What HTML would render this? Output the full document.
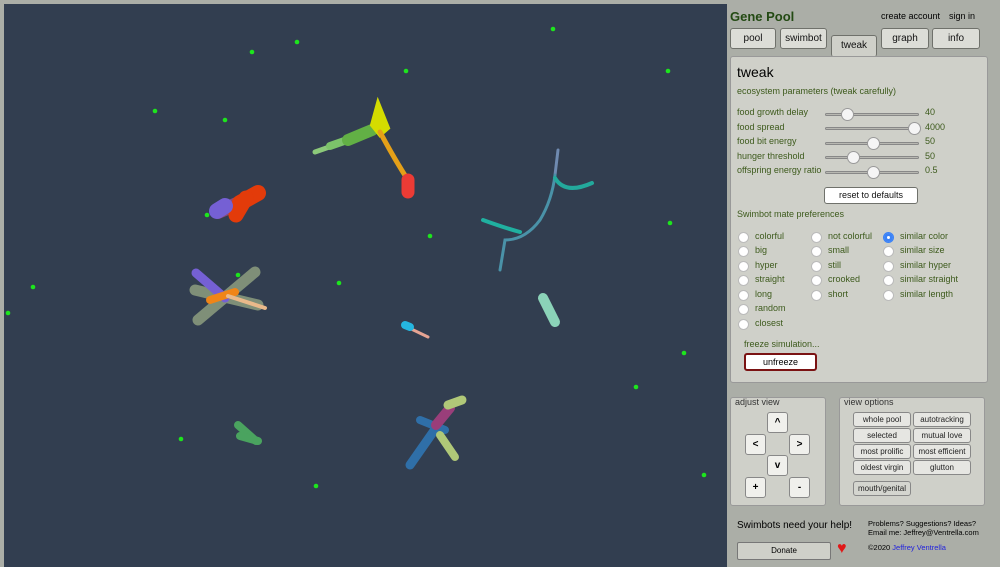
<!DOCTYPE html><html><head><style>
*{margin:0;padding:0;box-sizing:border-box}
body{width:1000px;height:567px;background:#abaea7;font-family:"Liberation Sans",sans-serif;position:relative;overflow:hidden}
.a{position:absolute}
.btn{position:absolute;background:#dcddd7;border:1px solid #6f716b;border-radius:3px;font-size:10px;text-align:center;color:#111}
.g{color:#3d5a1c;font-size:9px;position:absolute}
.sl{position:absolute;left:825px;width:94px;height:3px;background:#b8b8b2;border:1px solid #888;border-radius:2px}
.kn{position:absolute;width:13px;height:13px;border-radius:50%;background:#f5f5f5;border:1px solid #999;top:-6px}
.r{position:absolute;width:11px;height:11px;border-radius:50%;background:#fff;border:1px solid #bbb}
.vb{position:absolute;background:#e6e6e2;border:1px solid #888;border-radius:3px;font-size:8px;text-align:center;line-height:13px;height:15px;width:58px;color:#222}
.ab{position:absolute;width:21px;height:21px;background:#f0f0ec;border:1px solid #888;border-radius:3px;font-size:10px;text-align:center;line-height:19px;font-weight:bold}
</style></head><body>
<div class="a" style="left:4px;top:4px;width:723px;height:563px;background:#323e50"></div>
<svg class="a" style="left:0;top:0" width="728" height="567">
<g fill="#1de51d">
<circle cx="252" cy="52" r="2.3"/><circle cx="297" cy="42" r="2.3"/><circle cx="553" cy="29" r="2.3"/><circle cx="406" cy="71" r="2.3"/><circle cx="668" cy="71" r="2.3"/><circle cx="155" cy="111" r="2.3"/><circle cx="225" cy="120" r="2.3"/><circle cx="430" cy="236" r="2.3"/><circle cx="670" cy="223" r="2.3"/><circle cx="238" cy="275" r="2.3"/><circle cx="339" cy="283" r="2.3"/><circle cx="33" cy="287" r="2.3"/><circle cx="8" cy="313" r="2.3"/><circle cx="684" cy="353" r="2.3"/><circle cx="636" cy="387" r="2.3"/><circle cx="181" cy="439" r="2.3"/><circle cx="704" cy="475" r="2.3"/><circle cx="316" cy="486" r="2.3"/><circle cx="207" cy="215" r="2.3"/>
</g>
<g stroke-linecap="round" fill="none">
<line x1="315" y1="152" x2="335" y2="145" stroke="#8cc97a" stroke-width="5"/>
<line x1="330" y1="146" x2="350" y2="139" stroke="#7cc36a" stroke-width="8"/>
<line x1="348" y1="140" x2="372" y2="130" stroke="#62b045" stroke-width="12"/>
<path d="M378 103 L388 128 L380 135 L372 125Z" fill="#d4dc00" stroke="#d4dc00" stroke-width="4"/>
<path d="M380 132 Q395 160 408 180" stroke="#e5a018" stroke-width="5"/>
<line x1="408" y1="180" x2="408" y2="192" stroke="#ec3b35" stroke-width="13"/>
<line x1="218" y1="212" x2="246" y2="200" stroke="#8a4a7a" stroke-width="14"/>
<line x1="240" y1="203" x2="258" y2="193" stroke="#e33b0a" stroke-width="16"/>
<line x1="236" y1="215" x2="246" y2="198" stroke="#e33b0a" stroke-width="15"/>
<line x1="217" y1="211" x2="225" y2="206" stroke="#7560d4" stroke-width="16"/>
<line x1="195" y1="290" x2="258" y2="305" stroke="#7f8f78" stroke-width="11"/>
<line x1="198" y1="320" x2="255" y2="272" stroke="#7f8f78" stroke-width="11"/>
<line x1="196" y1="273" x2="225" y2="298" stroke="#7560d4" stroke-width="9"/>
<line x1="210" y1="300" x2="235" y2="292" stroke="#f08518" stroke-width="8"/>
<line x1="228" y1="296" x2="265" y2="308" stroke="#e9b98a" stroke-width="4"/>
<line x1="558" y1="150" x2="555" y2="175" stroke="#6f8ab0" stroke-width="3"/>
<path d="M555 175 Q552 200 540 220 Q525 240 505 240 L500 270" stroke="#4a92a8" stroke-width="3"/>
<path d="M555 178 Q565 195 592 183" stroke="#23a99c" stroke-width="4"/>
<path d="M483 220 Q505 228 520 232" stroke="#20b0a0" stroke-width="4"/>
<line x1="543" y1="298" x2="555" y2="322" stroke="#8bd3b8" stroke-width="10"/>
<line x1="405" y1="326" x2="428" y2="337" stroke="#e6a493" stroke-width="3"/>
<line x1="405" y1="325" x2="410" y2="327" stroke="#25b6e0" stroke-width="8"/>
<line x1="238" y1="425" x2="256" y2="441" stroke="#4aa35f" stroke-width="8"/>
<line x1="240" y1="436" x2="258" y2="441" stroke="#4aa35f" stroke-width="8"/>
<line x1="410" y1="465" x2="438" y2="425" stroke="#2f6fa8" stroke-width="9"/>
<line x1="420" y1="420" x2="445" y2="430" stroke="#2f6fa8" stroke-width="8"/>
<line x1="436" y1="425" x2="450" y2="408" stroke="#9a3e7a" stroke-width="10"/>
<line x1="448" y1="405" x2="462" y2="400" stroke="#b0c878" stroke-width="9"/>
<line x1="440" y1="435" x2="455" y2="457" stroke="#b0c878" stroke-width="8"/>
</g></svg>
<div class="a" style="left:730px;top:9px;font-weight:bold;font-size:13px;color:#234a13">Gene Pool</div>
<div class="a" style="left:881px;top:11px;font-size:9px">create account</div>
<div class="a" style="left:949px;top:11px;font-size:9px">sign in</div>
<div class="btn" style="left:730px;top:28px;width:46px;height:21px;line-height:19px">pool</div>
<div class="btn" style="left:780px;top:28px;width:47px;height:21px;line-height:19px">swimbot</div>
<div class="btn" style="left:831px;top:35px;width:46px;height:22px;line-height:20px;border-bottom:none;background:#cfd0c9">tweak</div>
<div class="btn" style="left:881px;top:28px;width:48px;height:21px;line-height:19px">graph</div>
<div class="btn" style="left:932px;top:28px;width:48px;height:21px;line-height:19px">info</div>
<div class="a" style="left:730px;top:56px;width:258px;height:327px;background:#cfd0c9;border:1px solid #999;border-radius:3px"></div>
<div class="a" style="left:737px;top:64px;font-size:14px">tweak</div>
<div class="g" style="left:737px;top:86px">ecosystem parameters (tweak carefully)</div>
<div class="g" style="left:737px;top:107px">food growth delay</div><div class="g" style="left:925px;top:107px">40</div>
<div class="g" style="left:737px;top:122px">food spread</div><div class="g" style="left:925px;top:122px">4000</div>
<div class="g" style="left:737px;top:136px">food bit energy</div><div class="g" style="left:925px;top:136px">50</div>
<div class="g" style="left:737px;top:151px">hunger threshold</div><div class="g" style="left:925px;top:151px">50</div>
<div class="g" style="left:737px;top:165px">offspring energy ratio</div><div class="g" style="left:925px;top:165px">0.5</div>
<div class="sl" style="top:113px"><div class="kn" style="left:15px"></div></div>
<div class="sl" style="top:127px"><div class="kn" style="left:82px"></div></div>
<div class="sl" style="top:142px"><div class="kn" style="left:41px"></div></div>
<div class="sl" style="top:156px"><div class="kn" style="left:21px"></div></div>
<div class="sl" style="top:171px"><div class="kn" style="left:41px"></div></div>
<div class="btn" style="left:824px;top:187px;width:94px;height:17px;line-height:15px;background:#fff;font-size:9px">reset to defaults</div>
<div class="g" style="left:737px;top:209px">Swimbot mate preferences</div>
<div class="r" style="left:738px;top:232px"></div><div class="g" style="left:755px;top:231px">colorful</div>
<div class="r" style="left:738px;top:246px"></div><div class="g" style="left:755px;top:245px">big</div>
<div class="r" style="left:738px;top:261px"></div><div class="g" style="left:755px;top:260px">hyper</div>
<div class="r" style="left:738px;top:275px"></div><div class="g" style="left:755px;top:274px">straight</div>
<div class="r" style="left:738px;top:290px"></div><div class="g" style="left:755px;top:289px">long</div>
<div class="r" style="left:738px;top:304px"></div><div class="g" style="left:755px;top:303px">random</div>
<div class="r" style="left:738px;top:319px"></div><div class="g" style="left:755px;top:318px">closest</div>
<div class="r" style="left:811px;top:232px"></div><div class="g" style="left:828px;top:231px">not colorful</div>
<div class="r" style="left:811px;top:246px"></div><div class="g" style="left:828px;top:245px">small</div>
<div class="r" style="left:811px;top:261px"></div><div class="g" style="left:828px;top:260px">still</div>
<div class="r" style="left:811px;top:275px"></div><div class="g" style="left:828px;top:274px">crooked</div>
<div class="r" style="left:811px;top:290px"></div><div class="g" style="left:828px;top:289px">short</div>
<div class="r" style="left:883px;top:232px;background:#3b82f6;border-color:#3b82f6;box-shadow:inset 0 0 0 3px #3b82f6,inset 0 0 0 5px #fff"></div><div class="g" style="left:900px;top:231px">similar color</div>
<div class="r" style="left:883px;top:246px"></div><div class="g" style="left:900px;top:245px">similar size</div>
<div class="r" style="left:883px;top:261px"></div><div class="g" style="left:900px;top:260px">similar hyper</div>
<div class="r" style="left:883px;top:275px"></div><div class="g" style="left:900px;top:274px">similar straight</div>
<div class="r" style="left:883px;top:290px"></div><div class="g" style="left:900px;top:289px">similar length</div>
<div class="g" style="left:744px;top:339px">freeze simulation...</div>
<div class="a" style="left:744px;top:353px;width:73px;height:18px;border:2px solid #7a1212;border-radius:3px;background:#fff;font-size:9px;text-align:center;line-height:14px">unfreeze</div>
<div class="a" style="left:730px;top:397px;width:96px;height:109px;background:#cfd0c9;border:1px solid #999;border-radius:3px"></div>
<div class="a" style="left:735px;top:397px;font-size:9px;color:#333">adjust view</div>
<div class="ab" style="left:767px;top:412px">^</div>
<div class="ab" style="left:745px;top:434px">&lt;</div>
<div class="ab" style="left:789px;top:434px">&gt;</div>
<div class="ab" style="left:767px;top:455px">v</div>
<div class="ab" style="left:745px;top:477px">+</div>
<div class="ab" style="left:789px;top:477px">-</div>
<div class="a" style="left:839px;top:397px;width:146px;height:109px;background:#cfd0c9;border:1px solid #999;border-radius:3px"></div>
<div class="a" style="left:844px;top:397px;font-size:9px;color:#333">view options</div>
<div class="vb" style="left:853px;top:412px">whole pool</div><div class="vb" style="left:913px;top:412px">autotracking</div>
<div class="vb" style="left:853px;top:428px">selected</div><div class="vb" style="left:913px;top:428px">mutual love</div>
<div class="vb" style="left:853px;top:444px">most prolific</div><div class="vb" style="left:913px;top:444px">most efficient</div>
<div class="vb" style="left:853px;top:460px">oldest virgin</div><div class="vb" style="left:913px;top:460px">glutton</div>
<div class="vb" style="left:853px;top:481px;background:#d4d5cf">mouth/genital</div>
<div class="a" style="left:737px;top:520px;font-size:10px">Swimbots need your help!</div>
<div class="a" style="left:868px;top:519px;font-size:7.5px;line-height:9px">Problems? Suggestions? Ideas?<br>Email me: Jeffrey@Ventrella.com</div>
<div class="a" style="left:868px;top:543px;font-size:7.5px">©2020 <span style="color:#2222dd">Jeffrey Ventrella</span></div>
<div class="a" style="left:737px;top:542px;width:94px;height:18px;background:#cfd0c9;border:1px solid #777;border-radius:2px;font-size:8px;text-align:center;line-height:16px">Donate</div>
<div class="a" style="left:837px;top:540px;color:#e01818;font-size:16px;line-height:18px">♥</div>
</body></html>
